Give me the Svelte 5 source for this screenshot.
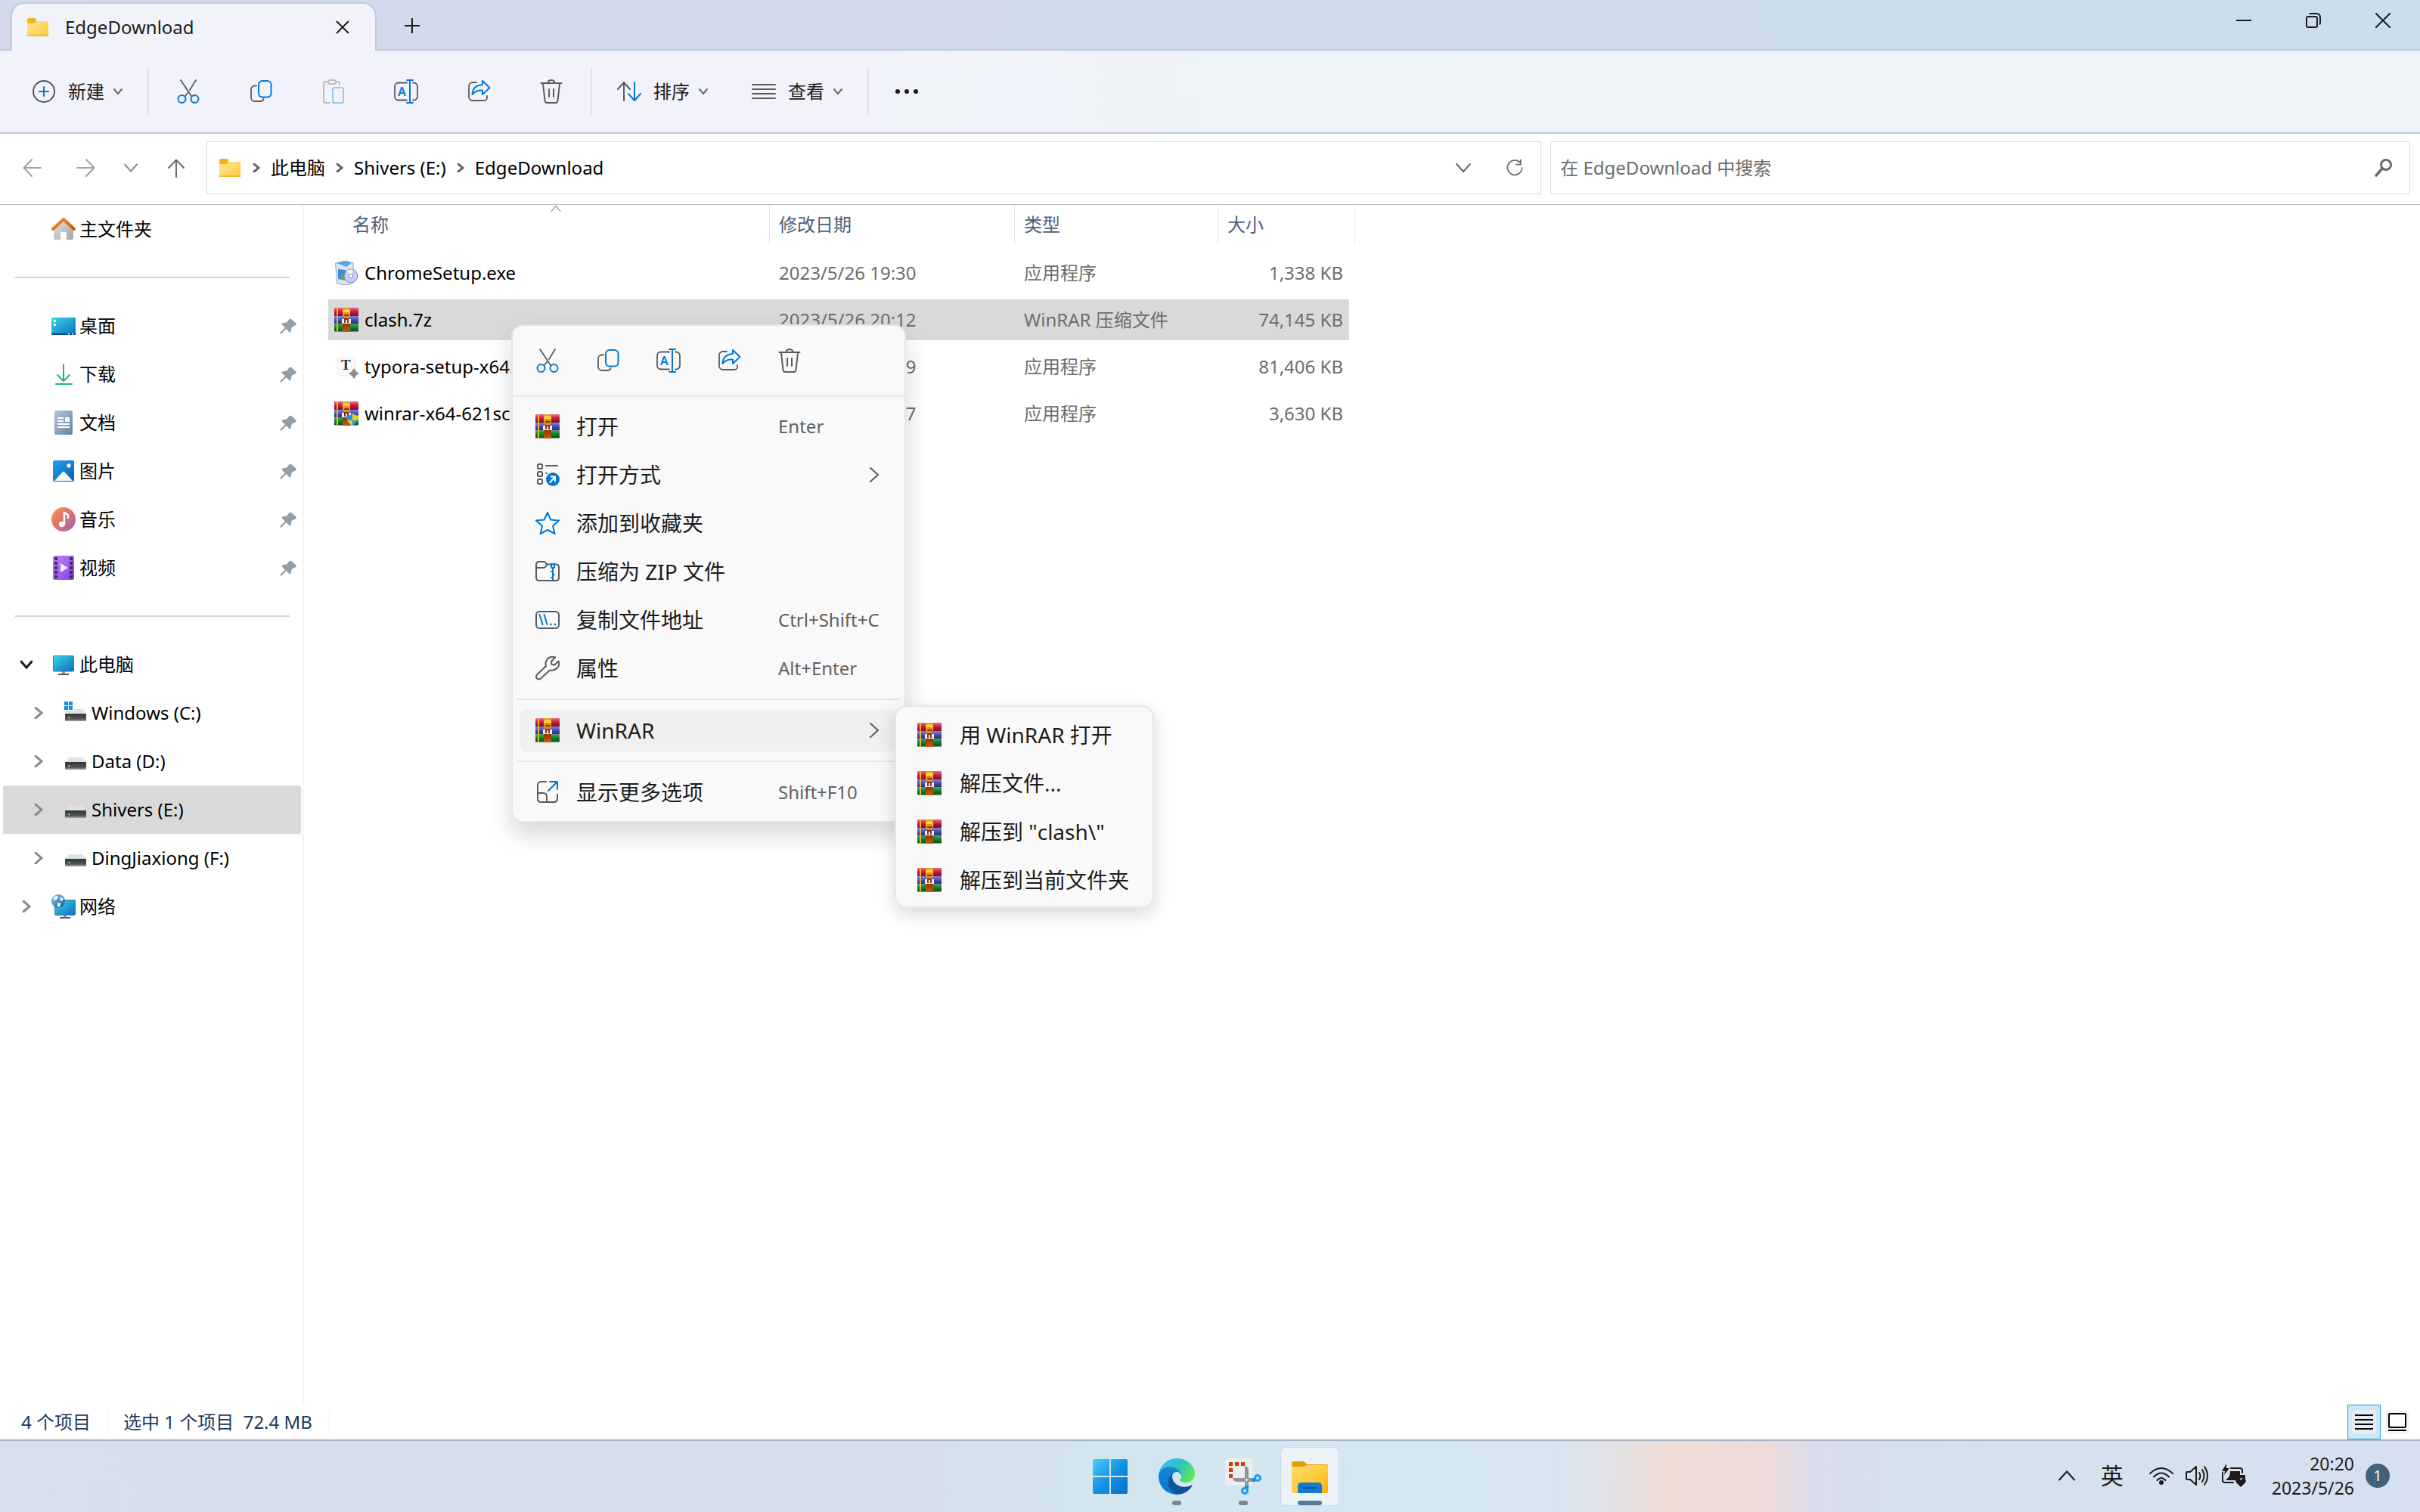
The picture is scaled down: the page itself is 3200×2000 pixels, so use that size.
<script lang="ts">
  interface Place {
    label: string
    icon: string
    level?: number
    pinned?: boolean
    open?: boolean
    expandable?: boolean
    selected?: boolean
  }

  interface FileRow {
    name: string
    icon: string
    date: string
    type: string
    size: string
    selected?: boolean
  }

  interface MenuEntry {
    label: string
    icon: string
    shortcut?: string
    submenu?: boolean
  }

  const quickAccess: Place[] = [
    { label: '桌面', icon: 'desktop', pinned: true },
    { label: '下载', icon: 'download', pinned: true },
    { label: '文档', icon: 'document', pinned: true },
    { label: '图片', icon: 'picture', pinned: true },
    { label: '音乐', icon: 'music', pinned: true },
    { label: '视频', icon: 'video', pinned: true }
  ]

  const tree: Place[] = [
    { label: '此电脑', icon: 'pc', expandable: true, open: true },
    { label: 'Windows (C:)', icon: 'drive-system', level: 1, expandable: true },
    { label: 'Data (D:)', icon: 'drive', level: 1, expandable: true },
    { label: 'Shivers (E:)', icon: 'drive', level: 1, expandable: true, selected: true },
    { label: 'DingJiaxiong (F:)', icon: 'drive', level: 1, expandable: true },
    { label: '网络', icon: 'network', expandable: true }
  ]

  const files: FileRow[] = [
    { name: 'ChromeSetup.exe', icon: 'installer', date: '2023/5/26 19:30', type: '应用程序', size: '1,338 KB' },
    { name: 'clash.7z', icon: 'winrar', date: '2023/5/26 20:12', type: 'WinRAR 压缩文件', size: '74,145 KB', selected: true },
    { name: 'typora-setup-x64.exe', icon: 'typora', date: '2023/5/26 19:49', type: '应用程序', size: '81,406 KB' },
    { name: 'winrar-x64-621sc.exe', icon: 'winrar-setup', date: '2023/5/26 20:17', type: '应用程序', size: '3,630 KB' }
  ]

  const crumbs = ['此电脑', 'Shivers (E:)', 'EdgeDownload']

  const toolbarActions = [
    { icon: 'cut', label: '剪切' },
    { icon: 'copy', label: '复制' },
    { icon: 'paste', label: '粘贴' },
    { icon: 'rename', label: '重命名' },
    { icon: 'share', label: '共享' },
    { icon: 'trash', label: '删除' }
  ]
  const menuActions = toolbarActions.filter((a) => a.icon !== 'paste')

  const menuTop: MenuEntry[] = [
    { label: '打开', icon: 'winrar', shortcut: 'Enter' },
    { label: '打开方式', icon: 'open-with', submenu: true },
    { label: '添加到收藏夹', icon: 'star' },
    { label: '压缩为 ZIP 文件', icon: 'zip' },
    { label: '复制文件地址', icon: 'path', shortcut: 'Ctrl+Shift+C' },
    { label: '属性', icon: 'wrench', shortcut: 'Alt+Enter' }
  ]

  const winrarItems = ['用 WinRAR 打开', '解压文件...', '解压到 "clash\\"', '解压到当前文件夹']
</script>

{#snippet winrarBooks()}
  <rect width="32" height="11" rx="1" fill="url(#book-red)" />
  <rect y="11" width="32" height="10.500" rx="1" fill="url(#book-blue)" />
  <rect y="21.500" width="32" height="10" rx="1" fill="url(#book-green)" />
  <path d="M4 1v9M4 12v9M4 22v8.500" stroke="#f3c623" stroke-width="1.800" />
  <rect x="11" width="10" height="11" fill="#d9a21b" />
  <rect x="11" y="21" width="10" height="11" fill="url(#strap)" />
  <path d="M11 5q0-3 5-3t5 3v2H11z" fill="#ffd23c" />
  <rect x="12" y="6" width="8" height="9" rx="2" fill="#e88a18" />
  <path d="M14 10h1.500M17 10h1.500" stroke="#3a1a00" stroke-width="1.500" />
  <path d="M10 15h12v6H10z" fill="#f4f0ea" />
  <path d="M13 14h6v2H13zM13 16h2v4h-2zM17 16h2v4h-2z" fill="#8a2c10" />
{/snippet}

{#snippet driveBody()}
  <path d="M7 11h18l5 6H2z" fill="#e0e1e6" />
  <rect x="2" y="17" width="28" height="10" rx="1" fill="url(#drive)" />
  <circle cx="7.500" cy="22" r="1.300" fill="#3ee85c" />
{/snippet}

{#snippet glyph(name: string, size = 32)}
  <svg class="glyph" width={size} height={size} viewBox="0 0 32 32" fill="none" stroke-linecap="round" stroke-linejoin="round" aria-hidden="true">
    {#if name === 'new'}
      <circle cx="16" cy="16" r="14" stroke="#555" stroke-width="2" />
      <path d="M16 10v12M10 16h12" stroke="#0078d7" stroke-width="2" />
    {:else if name === 'cut'}
      <path d="M6 1l14 21M26 1l-8 13M15 18l-3 4" stroke="#5b5b5b" stroke-width="1.800" />
      <g stroke="#0078d7" stroke-width="2"><circle cx="7.500" cy="26" r="5" /><circle cx="24.500" cy="26" r="5" /></g>
    {:else if name === 'copy'}
      <path d="M10 8.500H8a5 5 0 0 0-5 5V24a5 5 0 0 0 5 5h7q4 0 4.500-3" stroke="#5b5b5b" stroke-width="1.800" />
      <rect x="13" y="2" width="16.500" height="21.500" rx="5" stroke="#0078d7" stroke-width="2" />
    {:else if name === 'paste'}
      <path d="M9 3H5Q3 3 3 5v24q0 2 2 2h6M19 3h3q2 0 2 2v2" stroke="#bdbec3" stroke-width="2" />
      <rect x="9" y="1" width="10" height="5" rx="2.500" stroke="#bdbec3" stroke-width="2" />
      <rect x="15" y="11" width="14" height="20" rx="2" stroke="#99c8ec" stroke-width="2" />
    {:else if name === 'rename'}
      <path d="M17 4.500H6a5 5 0 0 0-5 5v13a5 5 0 0 0 5 5h11M25 4.500h1a5 5 0 0 1 5 5v13a5 5 0 0 1-5 5h-1" stroke="#5b5b5b" stroke-width="1.800" />
      <path d="M17 1h8M21 1v30M17 31h8" stroke="#0078d7" stroke-width="2" />
      <text x="5" y="21.500" font-size="16" font-weight="600" fill="#0078d7">A</text>
    {:else if name === 'share'}
      <path d="M13 4H8a5 5 0 0 0-5 5v14a5 5 0 0 0 5 5h15a4 4 0 0 0 4-4v-2" stroke="#5b5b5b" stroke-width="1.800" />
      <path d="M21 2l9.500 9-9.500 9v-5.500Q12 14 7.500 20 8 8 21 7z" stroke="#0078d7" stroke-width="2" />
    {:else if name === 'trash'}
      <path d="M2.500 5h27M12 4q0-3 4-3t4 3M5 6l2.500 22q.3 3 3 3h11q2.700 0 3-3L27 6M13 13v10M19 13v10" stroke="#5b5b5b" stroke-width="2" />
    {:else if name === 'sort'}
      <path d="M9 28V4M1 13l8-9 8 9" stroke="#5b5b5b" stroke-width="2" />
      <path d="M23 4v24M15 19l8 9 8-9" stroke="#0078d7" stroke-width="2" />
    {:else if name === 'view'}
      <path d="M1 7h30M1 13h30M1 19h30M1 25h30" stroke="#5b5b5b" stroke-width="2" />
    {:else if name === 'more'}
      <g fill="#1b1b1b"><circle cx="4" cy="16" r="3" /><circle cx="16" cy="16" r="3" /><circle cx="28" cy="16" r="3" /></g>
    {:else if name === 'winrar'}
      {@render winrarBooks()}
    {:else if name === 'winrar-setup'}
      {@render winrarBooks()}
      <path d="M24 16q4 3 8 3 0 9-8 13-8-4-8-13 4 0 8-3z" fill="#1a9ae8" />
      <path d="M24 16q4 3 8 3 0 4-1.500 6H24zM24 25v7q-5-3-6.500-7z" fill="#fcc80e" />
    {:else if name === 'open-with'}
      <g stroke="#5b5b5b" stroke-width="2">
        <rect x="3" y="2" width="6" height="6" rx="1.500" /><rect x="3" y="12" width="6" height="6" rx="1.500" /><rect x="3" y="22" width="6" height="6" rx="1.500" />
        <path d="M14 4h15M14 14h1" />
      </g>
      <circle cx="23" cy="22" r="9" fill="#0078d7" />
      <path d="M19.500 26l6-7M20.500 18.500h5.500v6" stroke="#fff" stroke-width="2" />
    {:else if name === 'star'}
      <path d="M16 2l4.300 9.500L31 12.600l-8 7.200L25.500 30 16 25l-9.500 5L9 19.800 1 12.600l10.700-1.100z" stroke="#0078d7" stroke-width="2" />
    {:else if name === 'zip'}
      <path d="M1 24V7q0-4 4-4h6q2 0 4 3.500H27q4 0 4 4V24q0 4-4 4H5q-4 0-4-4zM1 11h10q2 0 4-4.500" stroke="#5b5b5b" stroke-width="2" />
      <path d="M21 6h4v5h-4zM23 11v17M21 16h2M23 20h2M21 24h2" stroke="#0078d7" stroke-width="2" />
    {:else if name === 'path'}
      <rect x="1" y="5" width="30" height="22" rx="4.500" stroke="#5b5b5b" stroke-width="2" />
      <path d="M5.500 9l4 13M11.500 9l4 13" stroke="#0078d7" stroke-width="2" />
      <g fill="#0078d7"><circle cx="20.500" cy="22" r="1.400" /><circle cx="26" cy="22" r="1.400" /></g>
    {:else if name === 'wrench'}
      <path d="M26 1.500Q20-1 15.500 4q-3 4-1.500 9L2 24.500q-2 3 0 5 2.500 2 5 0L19 18.500q6 1 10-3 3.500-4 1.500-9l-5 5-4-.5-.5-4z" stroke="#5b5b5b" stroke-width="2" />
    {:else if name === 'show-more'}
      <path d="M14 2H8q-5 0-5 5v17q0 5 5 5h16q5 0 5-5v-5M3 17h7q5 0 5 5v7" stroke="#5b5b5b" stroke-width="2" />
      <path d="M17 14L29 2M19 2h10v10" stroke="#0078d7" stroke-width="2" />
    {:else if name === 'home'}
      <path d="M3 14L16 3l13 11v14q0 2-2 2h-6q-1 0-1-1v-8q0-1-1-1h-6q-1 0-1 1v8q0 1-1 1H5q-2 0-2-2z" fill="url(#wall)" />
      <path d="M2 16L16 3l14 13" stroke="url(#roof)" stroke-width="4" />
    {:else if name === 'desktop'}
      <rect y="5" width="32" height="23" rx="1.500" fill="url(#screen)" />
      <path d="M0 26h32v1q0 1-1 1H1q-1 0-1-1z" fill="#0b4a7c" />
      <path d="M3 8h3v3H3zM3 13h3v3H3zM22 26h2v1.500h-2zM27 26h2v1.500h-2z" fill="#fff" />
    {:else if name === 'download'}
      <path d="M16 3v22M8 17l8 8 8-8M6 29h21" stroke="#20b096" stroke-width="2" />
    {:else if name === 'document'}
      <rect x="4" width="24" height="32" rx="2" fill="url(#paper)" />
      <path d="M8 10h8M8 14h8M8 18h16M8 22h16" stroke="#fff" stroke-width="1.800" stroke-linecap="butt" />
      <path d="M18 9h6v6h-6z" fill="#fff" />
    {:else if name === 'picture'}
      <rect x="2" y="2" width="28" height="28" rx="2" fill="url(#photo)" />
      <path d="M4 29l11-12q1-1 2 0l11 12z" fill="#f2f8fd" />
      <circle cx="23" cy="9" r="2.700" fill="#fff" />
    {:else if name === 'music'}
      <circle cx="16" cy="16" r="16" fill="url(#disc)" />
      <path d="M17 23V7l5 3v4" stroke="#fff" stroke-width="2.500" />
      <circle cx="13.500" cy="22.500" r="3.700" fill="#fff" />
    {:else if name === 'video'}
      <rect x="2" width="28" height="32" rx="2" fill="url(#film)" />
      <path d="M6 2v28M26 2v28" stroke="#432a73" stroke-width="4" stroke-dasharray="4 2" stroke-linecap="butt" />
      <path d="M12 10l10 6-10 6z" fill="#f1eaf8" />
    {:else if name === 'pc'}
      <path d="M14 25h4v3h-4z" fill="#8d9aa5" />
      <path d="M9 28h14v2H9z" fill="#4b5a66" />
      <rect x="2.500" y="4.500" width="27" height="20.500" rx="1" fill="url(#screen)" stroke="#5d6d78" />
    {:else if name === 'drive'}
      {@render driveBody()}
    {:else if name === 'drive-system'}
      {@render driveBody()}
      <path d="M0 0h13v13H0z" fill="#fff" />
      <path d="M1 1h5v5H1zM7 1h5v5H7zM1 7h5v5H1zM7 7h5v5H7z" fill="#1490df" />
    {:else if name === 'network'}
      <path d="M16 28h4v3h-4z" fill="#8d9aa5" />
      <path d="M11 30h14v2H11z" fill="#4b5a66" />
      <rect x="4.500" y="7.500" width="27" height="20" rx="1" fill="url(#screen)" stroke="#5d6d78" />
      <circle cx="9" cy="9" r="9" fill="url(#globe)" />
      <path d="M2 6q4-5 6-4l1 3-4 3zM8 11l5 1-3 5-2-1zM12 3l4 3-2 3-3-2z" fill="#e6f3fb" />
    {:else if name === 'installer'}
      <path d="M2 3l13-3 10 3v26l-9 3-12-2z" fill="#dfe7f5" stroke="#8da0bf" />
      <path d="M3 3l12-3 8 3-7 5z" fill="#5aa5e8" />
      <path d="M5 11l10 1v14L5 24z" fill="#3d8be0" />
      <path d="M9 16l6 1v9l-6-1z" fill="#4cb83c" />
      <circle cx="22" cy="20" r="9" fill="#c5cbf3" stroke="#8188c4" />
      <path d="M22 20l-6-6q5-4 9-2z" fill="#eef2ff" />
      <circle cx="22" cy="20" r="2.500" fill="#fff" stroke="#8188c4" />
    {:else if name === 'typora'}
      <rect x="4" y="4" width="24" height="24" rx="4" fill="#fafafa" stroke="#ececec" />
      <text x="9" y="20" class="serif" font-size="19" font-weight="700" fill="#333">T</text>
      <circle cx="26" cy="25" r="4" fill="#8a8a8a" />
      <path d="M26 20v10M21 25h10" stroke="#8a8a8a" stroke-width="3" />
    {:else if name === 'folder'}
      <path d="M2 6q0-2 2-2h7q3 0 3 4v3H2z" fill="#f5b31a" />
      <path d="M2 11h9l3-3h15q1 0 1 1v18q0 1-1 1H3q-1 0-1-1z" fill="url(#folder)" />
      <path d="M2 27h28" stroke="#e3a21a" />
    {:else if name === 'pin'}
      <path d="M18 5q2-1 3 0l8 7q1 2-1 3l-6 3-2 8q-1 1-2 0l-5-5-8 8-2 0 0-2 8-8-5-5q-1-1 0-2l8-2z" fill="#929da5" />
    {:else if name === 'back'}
      <path d="M27 16H5M15 5L4.500 16 15 27" stroke="#a2a2a2" stroke-width="2" />
    {:else if name === 'forward'}
      <path d="M5 16h22M17 5l10.500 11L17 27" stroke="#a2a2a2" stroke-width="2" />
    {:else if name === 'up'}
      <path d="M16 28V6M6 16L16 5.500 26 16" stroke="#6c6c6c" stroke-width="2" />
    {:else if name === 'refresh'}
      <path d="M24 8a11 11 0 1 0 3 8M25 4v7h-7" stroke="#6c6c6c" stroke-width="2" />
    {:else if name === 'search'}
      <circle cx="19" cy="12" r="6.500" stroke="#6c6c6c" stroke-width="3" />
      <path d="M14 17l-8 9" stroke="#6c6c6c" stroke-width="3.500" />
    {:else if name === 'wifi'}
      <path d="M1 13q15-14 30 0M6 17.500q10-10 20 0M10.500 22q5.500-6 11 0" stroke="#1b1b1b" stroke-width="2" />
      <circle cx="16" cy="25" r="3" fill="#1b1b1b" />
    {:else if name === 'volume'}
      <path d="M1 12v8q0 1 1 1h4l8 7V4L6 11H2q-1 0-1 1zM18 12q3 4 0 9M22 8q5 8 0 16M25 4q8 12 0 24" stroke="#1b1b1b" stroke-width="2" />
    {:else if name === 'battery'}
      <path d="M12 6h12q3 0 3 3v3M1 12v10q0 3 3 3h11" stroke="#1b1b1b" stroke-width="2" />
      <path d="M11 10h13v5h7v6l-5-2-6 3H5l4-4q2-3 2-8z" fill="#1b1b1b" />
      <path d="M6 0L0 10h4l-1 5 7-9H6z" fill="#1b1b1b" />
      <path d="M25 31l-6-6q-2-3 1-5 3-1 5 2 2-3 5-2 3 2 1 5z" fill="#1b1b1b" />
    {/if}
  </svg>
{/snippet}

{#snippet chevron(dir: 'down' | 'up' | 'right', size = 12, weight = 2)}
  <svg class="glyph chevron {dir}" width={size} height={size} viewBox="0 0 {size} {size}" fill="none" stroke="currentColor" stroke-width={weight} stroke-linecap="round" aria-hidden="true">
    <path d="M1 {size / 4}L{size / 2} {size * 0.75}L{size - 1} {size / 4}" />
  </svg>
{/snippet}

{#snippet placeRow(place: Place)}
  <li>
    <a
      href="#{place.icon}"
      class="place"
      class:nested={place.level === 1}
      class:selected={place.selected}
      aria-current={place.selected ? 'page' : undefined}
    >
      <span class="twisty" class:open={place.open}>
        {#if place.expandable}
          {@render chevron(place.open ? 'down' : 'right', 16, 3)}
        {/if}
      </span>
      {@render glyph(place.icon)}
      <span class="place-label">{place.label}</span>
      {#if place.pinned}
        <span class="pin">{@render glyph('pin', 26)}</span>
      {/if}
    </a>
  </li>
{/snippet}

{#snippet menuItem(entry: MenuEntry, active = false)}
  <button type="button" role="menuitem" class="menu-item" class:active>
    {@render glyph(entry.icon)}
    <span class="menu-label">{entry.label}</span>
    {#if entry.shortcut}
      <span class="shortcut">{entry.shortcut}</span>
    {/if}
    {#if entry.submenu}
      <span class="menu-arrow">{@render chevron('right', 20, 2)}</span>
    {/if}
  </button>
{/snippet}

<!-- shared gradients -->
<svg class="defs" width="0" height="0" aria-hidden="true">
  <defs>
    <linearGradient id="book-red" x1="0" y1="0" x2="0" y2="1"><stop offset="0" stop-color="#f0688c" /><stop offset=".5" stop-color="#c8193c" /><stop offset="1" stop-color="#7d0c22" /></linearGradient>
    <linearGradient id="book-blue" x1="0" y1="0" x2="0" y2="1"><stop offset="0" stop-color="#7f86e0" /><stop offset=".5" stop-color="#474bb4" /><stop offset="1" stop-color="#25276c" /></linearGradient>
    <linearGradient id="book-green" x1="0" y1="0" x2="0" y2="1"><stop offset="0" stop-color="#38a84e" /><stop offset=".5" stop-color="#147a30" /><stop offset="1" stop-color="#0a4a1c" /></linearGradient>
    <linearGradient id="strap" x1="0" y1="0" x2="0" y2="1"><stop offset="0" stop-color="#8a3a08" /><stop offset="1" stop-color="#cc5a10" /></linearGradient>
    <linearGradient id="drive" x1="0" y1="0" x2="0" y2="1"><stop offset="0" stop-color="#333" /><stop offset=".7" stop-color="#555" /><stop offset="1" stop-color="#aaa" /></linearGradient>
    <linearGradient id="wall" x1="0" y1="0" x2="1" y2="1"><stop offset="0" stop-color="#e6e6e6" /><stop offset="1" stop-color="#a3a3a3" /></linearGradient>
    <linearGradient id="roof" x1="0" y1="0" x2="1" y2="1"><stop offset="0" stop-color="#f7921e" /><stop offset="1" stop-color="#d44c0c" /></linearGradient>
    <linearGradient id="screen" x1="0" y1="0" x2="1" y2="1"><stop offset="0" stop-color="#36dbe4" /><stop offset="1" stop-color="#0a6cc0" /></linearGradient>
    <linearGradient id="paper" x1="0" y1="0" x2="1" y2="1"><stop offset="0" stop-color="#b4c4d6" /><stop offset="1" stop-color="#6485a6" /></linearGradient>
    <linearGradient id="photo" x1="0" y1="0" x2="1" y2="1"><stop offset="0" stop-color="#1ea0e8" /><stop offset="1" stop-color="#0860b0" /></linearGradient>
    <linearGradient id="disc" x1="0" y1="0" x2="1" y2="1"><stop offset="0" stop-color="#fa9648" /><stop offset=".5" stop-color="#dc7470" /><stop offset="1" stop-color="#9a62c0" /></linearGradient>
    <linearGradient id="film" x1="0" y1="0" x2="1" y2="1"><stop offset="0" stop-color="#bd84f5" /><stop offset="1" stop-color="#8340e0" /></linearGradient>
    <linearGradient id="globe" x1="0" y1="0" x2="1" y2="1"><stop offset="0" stop-color="#85c3e6" /><stop offset="1" stop-color="#145d94" /></linearGradient>
    <linearGradient id="folder" x1="0" y1="0" x2="1" y2="1"><stop offset="0" stop-color="#ffe597" /><stop offset="1" stop-color="#ffcb3c" /></linearGradient>
    <linearGradient id="win" x1="0" y1="0" x2="1" y2="1"><stop offset="0" stop-color="#4cd0ff" /><stop offset=".5" stop-color="#1493e2" /><stop offset="1" stop-color="#0070cc" /></linearGradient>
    <linearGradient id="edge-dark" x1="0" y1="0" x2="1" y2="0"><stop offset="0" stop-color="#0c59a4" /><stop offset="1" stop-color="#114a8b" /></linearGradient>
    <linearGradient id="edge-mid" x1=".5" y1="0" x2=".2" y2="1"><stop offset="0" stop-color="#1b86cf" /><stop offset="1" stop-color="#0078d7" /></linearGradient>
    <linearGradient id="edge-top" x1="0" y1=".3" x2="1" y2=".7"><stop offset="0" stop-color="#35c1f1" /><stop offset=".5" stop-color="#2ac3c5" /><stop offset="1" stop-color="#66eb4e" /></linearGradient>
    <linearGradient id="folder-big" x1="0" y1="0" x2="1" y2="1"><stop offset="0" stop-color="#ffda6c" /><stop offset=".6" stop-color="#ffc936" /><stop offset="1" stop-color="#f5b000" /></linearGradient>
  </defs>
</svg>

<div class="screen">
  <header class="titlebar">
    <div class="tab">
      {@render glyph('folder')}
      <span class="tab-title">EdgeDownload</span>
      <button type="button" class="tab-close" aria-label="关闭标签页">
        <svg width="18" height="18" viewBox="0 0 18 18" stroke="currentColor" stroke-width="2"><path d="M1 1l16 16M17 1L1 17" /></svg>
      </button>
    </div>
    <button type="button" class="new-tab" aria-label="新标签页">
      <svg width="20" height="20" viewBox="0 0 20 20" stroke="currentColor" stroke-width="2"><path d="M10 0v20M0 10h20" /></svg>
    </button>
    <div class="window-controls">
      <button type="button" aria-label="最小化">
        <svg width="20" height="20" viewBox="0 0 20 20" stroke="currentColor" stroke-width="2"><path d="M0 10h20" /></svg>
      </button>
      <button type="button" aria-label="还原">
        <svg width="20" height="20" viewBox="0 0 20 20" fill="none" stroke="currentColor" stroke-width="2"><rect x="1" y="5" width="14" height="14" rx="2" /><path d="M5 2q0-1 2-1h7q5 0 5 5v7q0 2-1 2" /></svg>
      </button>
      <button type="button" aria-label="关闭">
        <svg width="20" height="20" viewBox="0 0 20 20" stroke="currentColor" stroke-width="2"><path d="M0 0l20 20M20 0L0 20" /></svg>
      </button>
    </div>
  </header>

  <div class="toolbar">
    <button type="button" class="labelled">
      {@render glyph('new')}<span>新建</span>{@render chevron('down')}
    </button>
    <span class="rule"></span>
    {#each toolbarActions as action}
      <button type="button" class="tool" aria-label={action.label} disabled={action.icon === 'paste'}>{@render glyph(action.icon)}</button>
    {/each}
    <span class="rule"></span>
    <button type="button" class="labelled">
      {@render glyph('sort')}<span>排序</span>{@render chevron('down')}
    </button>
    <button type="button" class="labelled">
      {@render glyph('view')}<span>查看</span>{@render chevron('down')}
    </button>
    <span class="rule"></span>
    <button type="button" class="tool more" aria-label="更多">{@render glyph('more')}</button>
  </div>

  <div class="navbar">
    <button type="button" class="nav-btn" aria-label="后退">{@render glyph('back')}</button>
    <button type="button" class="nav-btn" aria-label="前进">{@render glyph('forward')}</button>
    <button type="button" class="nav-btn recent" aria-label="最近位置">{@render chevron('down', 18)}</button>
    <button type="button" class="nav-btn" aria-label="向上">{@render glyph('up')}</button>
    <div class="address">
      {@render glyph('folder')}
      {#each crumbs as crumb}
        <span class="crumb-arrow">{@render chevron('right', 12, 3)}</span>
        <a href="#{crumb}">{crumb}</a>
      {/each}
      <button type="button" class="address-btn push" aria-label="历史记录">{@render chevron('down', 20)}</button>
      <button type="button" class="address-btn" aria-label="刷新">{@render glyph('refresh', 28)}</button>
    </div>
    <label class="search">
      <input type="text" placeholder="在 EdgeDownload 中搜索" aria-label="搜索" />
      {@render glyph('search')}
    </label>
  </div>

  <div class="body">
    <nav class="sidebar" aria-label="导航窗格">
      <ul>
        {@render placeRow({ label: '主文件夹', icon: 'home' })}
      </ul>
      <hr />
      <ul>
        {#each quickAccess as place}
          {@render placeRow(place)}
        {/each}
      </ul>
      <hr />
      <ul>
        {#each tree as place}
          {@render placeRow(place)}
        {/each}
      </ul>
    </nav>

    <main class="files">
      <table>
        <colgroup>
          <col class="col-name" />
          <col class="col-date" />
          <col class="col-type" />
          <col class="col-size" />
          <col class="col-edge" />
        </colgroup>
        <thead>
          <tr>
            <th scope="col" aria-sort="ascending">
              <div class="head first">名称<span class="sort-mark">{@render chevron('up', 14, 1)}</span></div>
            </th>
            <th scope="col"><div class="head">修改日期</div></th>
            <th scope="col"><div class="head">类型</div></th>
            <th scope="col" colspan="2"><div class="head">大小</div></th>
          </tr>
        </thead>
        <tbody>
          {#each files as file}
            <tr class:selected={file.selected}>
              <td class="name"><span class="file">{@render glyph(file.icon)}{file.name}</span></td>
              <td>{file.date}</td>
              <td>{file.type}</td>
              <td class="size">{file.size}</td>
            </tr>
          {/each}
        </tbody>
      </table>
    </main>
  </div>

  <footer class="statusbar">
    <span class="status">4 个项目</span>
    <span class="status">选中 1 个项目&nbsp; 72.4 MB</span>
    <div class="view-switch">
      <button type="button" class="on" aria-label="详细信息" aria-pressed="true">
        <svg width="32" height="32" viewBox="0 0 32 32"><rect width="32" height="32" rx="4" fill="#e6edf2" /><path d="M4 7h24M4 13h24M4 19h24M4 25h24" stroke="#000" stroke-width="2" /></svg>
      </button>
      <button type="button" aria-label="大缩略图" aria-pressed="false">
        <svg width="32" height="32" viewBox="0 0 32 32" fill="none"><rect width="32" height="32" rx="4" fill="#f4f4f4" /><rect x="5" y="5" width="22" height="18" rx="1" fill="#fff" stroke="#000" stroke-width="2" /><path d="M4 27h24" stroke="#000" stroke-width="2" /></svg>
      </button>
    </div>
  </footer>

  <div class="taskbar">
    <div class="apps">
      <button type="button" class="app" aria-label="开始">
        <svg width="48" height="48" viewBox="0 0 48 48"><path d="M3 1h20v22H1V3q0-2 2-2zM25 1h20q2 0 2 2v20H25zM1 25h22v22H3q-2 0-2-2zM25 25h22v20q0 2-2 2H25z" fill="url(#win)" /></svg>
      </button>
      <button type="button" class="app running" aria-label="Microsoft Edge">
        <svg width="48" height="48" viewBox="0 0 256 256">
          <path d="M231 190.500c-3.400 1.800-6.900 3.400-10.500 4.700a101.500 101.500 0 0 1-35.900 6.600c-47.300 0-88.500-32.500-88.500-74.300 0-11.400 6.400-21.900 16.400-27.300-42.800 1.800-53.800 46.400-53.800 72.500 0 74 68.100 81.400 82.800 81.400 7.900 0 19.800-2.300 27-4.600l1.300-.4a128.300 128.300 0 0 0 66.600-52.800 4 4 0 0 0-5.400-5.800z" fill="url(#edge-dark)" />
          <path d="M105.700 241.400a79.200 79.200 0 0 1-22.700-21.300 80.700 80.700 0 0 1 29.500-120c3.100-1.400 8.400-4.100 15.500-4a32.400 32.400 0 0 1 25.700 13 31.900 31.900 0 0 1 6.300 18.700c0-.2 24.500-79.600-80-79.600-43.900 0-80 41.600-80 78.200a130.200 130.200 0 0 0 12.100 56 128 128 0 0 0 156.400 67 75.500 75.500 0 0 1-62.800-8z" fill="url(#edge-mid)" />
          <path d="M152.300 148.900c-.9 1-3.400 2.500-3.400 5.600 0 2.600 1.700 5.100 4.800 7.200 14.400 10 41.500 8.700 41.600 8.700 10.700 0 21.100-2.900 30.300-8.300A61.400 61.400 0 0 0 256 109.200c.3-22.400-8-37.300-11.300-43.900C223.500 23.900 177.700 0 128 0A128 128 0 0 0 0 126.200c.5-36.500 36.800-66 80-66 3.500 0 23.500.3 42 10.100 16.300 8.600 24.900 19 30.800 29.200 6.200 10.700 7.300 24.100 7.300 29.500s-2.700 13.300-7.800 19.900z" fill="url(#edge-top)" />
        </svg>
      </button>
      <button type="button" class="app running" aria-label="截图工具">
        <svg width="48" height="48" viewBox="0 0 48 48" fill="none">
          <rect width="36" height="36" rx="4" fill="#eceded" />
          <path d="M5 5h5v5H5zM13 5h5v5h-5zM21 5h5v5h-5zM5 13h5v5H5zM5 21h5v5H5z" fill="#d83b01" />
          <path d="M26 10q5 1 5 6v20h-5zM10 26h26v5H16q-5 0-6-5z" fill="#8d969d" />
          <path d="M26 36h5v4h-5zM36 26h4v5h-4z" fill="#1591dc" />
          <circle cx="26" cy="43" r="3.500" stroke="#1b9ee8" stroke-width="3" />
          <circle cx="43" cy="26" r="3.500" stroke="#1b9ee8" stroke-width="3" />
          <path d="M28.500 26.500v4M26.500 28.500h4" stroke="#fff" />
        </svg>
      </button>
      <button type="button" class="app running current" aria-label="文件资源管理器">
        <svg width="48" height="48" viewBox="0 0 48 48">
          <path d="M0 6q0-2 2-2h13q2 0 5 4h26q2 0 2 2v4H0z" fill="#dfa000" />
          <path d="M0 11h16q2 0 4-2h26q2 0 2 2v33q0 2-2 2H2q-2 0-2-2z" fill="url(#folder-big)" />
          <path d="M8 46V37q0-5 5-5h22q5 0 5 5v9z" fill="#0f7bd3" />
          <path d="M15 39h18" stroke="#0a4f93" stroke-width="2" stroke-linecap="round" />
        </svg>
      </button>
    </div>
    <div class="tray">
      <button type="button" aria-label="显示隐藏的图标">{@render chevron('up', 22)}</button>
      <button type="button" class="ime">英</button>
      <button type="button" class="system" aria-label="网络、音量、电池">
        {@render glyph('wifi')}{@render glyph('volume')}{@render glyph('battery')}
      </button>
      <button type="button" class="clock"><span>20:20</span><span>2023/5/26</span></button>
      <span class="badge">1</span>
    </div>
  </div>

  <div class="menu context" role="menu" aria-label="上下文菜单">
    <div class="menu-actions">
      {#each menuActions as action}
        <button type="button" aria-label={action.label}>{@render glyph(action.icon)}</button>
      {/each}
    </div>
    <div class="menu-list">
      {#each menuTop as entry}
        {@render menuItem(entry)}
      {/each}
      <hr />
      {@render menuItem({ label: 'WinRAR', icon: 'winrar', submenu: true }, true)}
      <hr />
      {@render menuItem({ label: '显示更多选项', icon: 'show-more', shortcut: 'Shift+F10' })}
    </div>
    <div class="menu submenu" role="menu" aria-label="WinRAR">
      {#each winrarItems as label}
        {@render menuItem({ label, icon: 'winrar' })}
      {/each}
    </div>
  </div>
</div>

<style>
  :global(body) {
    margin: 0;
  }

  .defs {
    position: absolute;
  }

  .screen {
    position: relative;
    display: flex;
    flex-direction: column;
    min-height: 100vh;
    background: #fff;
    color: #000;
    font-family: 'Noto Sans', 'Noto Sans CJK SC', sans-serif;
    font-size: 24px;
    line-height: 32px;
    overflow: hidden;
  }

  .serif {
    font-family: 'Liberation Serif', serif;
  }

  button {
    display: flex;
    align-items: center;
    justify-content: center;
    padding: 0;
    border: 0;
    background: none;
    color: inherit;
    font: inherit;
  }

  a {
    color: inherit;
    text-decoration: none;
  }

  ul {
    margin: 0;
    padding: 0;
    list-style: none;
  }

  .glyph {
    flex: none;
    display: block;
  }

  .chevron.up {
    transform: rotate(180deg);
  }

  .chevron.right {
    transform: rotate(-90deg);
  }

  /* title bar */
  .titlebar {
    display: flex;
    height: 67px;
    padding-left: 14px;
    background: linear-gradient(90deg, #d4d9eb, #d1dbec 40%, #cddceb 75%, #ccdeeb);
    box-shadow: inset 0 -2px #c0cade;
    color: #1b1b1b;
  }

  .tab {
    display: flex;
    align-items: center;
    align-self: flex-end;
    box-sizing: border-box;
    width: 484px;
    height: 64px;
    padding: 0 34px 0 18px;
    border: 2px solid #c0cade;
    border-bottom: 0;
    border-radius: 18px 18px 0 0;
    background: #f2f3fa;
  }

  .tab-title {
    flex: 1;
    margin-left: 20px;
  }

  .new-tab {
    width: 94px;
  }

  .window-controls {
    display: flex;
    height: 54px;
    margin-left: auto;
    padding-right: 3px;
  }

  .window-controls button {
    width: 92px;
  }

  /* command bar */
  .toolbar {
    display: flex;
    align-items: center;
    height: 108px;
    padding-left: 13px;
    border-bottom: 2px solid #c0c9dc;
    background: linear-gradient(90deg, #f2f3fa 35%, #eff4f9 50%);
    color: #1b1b1b;
  }

  .labelled {
    height: 64px;
    padding: 0 29px;
  }

  .labelled span {
    margin: 0 12px 0 16px;
  }

  .labelled :global(.chevron) {
    color: #666;
  }

  .tool {
    width: 96px;
    height: 64px;
  }

  .tool.more {
    width: 92px;
  }

  .rule {
    width: 2px;
    height: 64px;
    margin: 0 4px;
    background: #e3e4ea;
  }

  /* address row */
  .navbar {
    display: flex;
    align-items: center;
    height: 90px;
    padding: 0 13px 3px 8px;
    border-bottom: 1px solid #b9b9b9;
  }

  .nav-btn {
    width: 70px;
    height: 64px;
    color: #8a8a8a;
  }

  .nav-btn.recent {
    width: 50px;
  }

  .address,
  .search {
    display: flex;
    align-items: center;
    box-sizing: border-box;
    height: 70px;
    border: 1px solid #d9d9d9;
  }

  .address {
    flex: 19 1 0;
    margin: 0 12px 0 5px;
    padding-left: 14px;
  }

  .crumb-arrow {
    display: flex;
    justify-content: center;
    width: 38px;
    color: #666;
  }

  .address-btn {
    width: 68px;
    height: 64px;
    color: #666;
  }

  .push {
    margin-left: auto;
  }

  .search {
    flex: 12 1 0;
    padding: 0 18px 0 12px;
  }

  .search input {
    flex: 1;
    min-width: 0;
    padding: 0;
    border: 0;
    outline: 0;
    background: none;
    color: #000;
    font: inherit;
  }

  .search input::placeholder {
    color: #6d6d6d;
    opacity: 1;
  }

  /* sidebar and file list */
  .body {
    display: flex;
    flex: 1;
  }

  .sidebar {
    box-sizing: border-box;
    width: 402px;
    border-right: 2px solid #f5f5f5;
  }

  .sidebar hr {
    height: 2px;
    margin: 31px 17px 31px 20px;
    border: 0;
    background: #d2d2d2;
  }

  .place {
    display: flex;
    align-items: center;
    height: 64px;
    margin: 0 2px 0 4px;
    padding: 0 4px 0 19px;
    border-radius: 2px;
  }

  .place.nested {
    padding-left: 35px;
  }

  .place.selected {
    background: #d9d9d9;
  }

  .twisty {
    display: flex;
    justify-content: center;
    width: 24px;
    margin-right: 21px;
    color: #8b8b8b;
  }

  .twisty.open {
    color: #1b1b1b;
  }

  .place-label {
    margin-left: 5px;
  }

  .pin {
    margin-left: auto;
  }

  .files {
    flex: 1;
    padding-left: 32px;
  }

  table {
    width: 1358px;
    margin-top: -7px;
    border-collapse: separate;
    border-spacing: 0 8px;
    table-layout: fixed;
  }

  .col-name {
    width: 584px;
  }

  .col-date {
    width: 324px;
  }

  .col-type {
    width: 269px;
  }

  .col-size {
    width: 173px;
  }

  .col-edge {
    width: 8px;
  }

  th,
  td {
    padding: 0;
    font-weight: 400;
    text-align: left;
    white-space: nowrap;
  }

  th {
    height: 54px;
    vertical-align: top;
  }

  .head {
    position: relative;
    box-sizing: border-box;
    height: 50px;
    padding: 9px 0 0 12px;
    border-right: 1px solid #e4e4e4;
    color: #4c607a;
  }

  .head.first {
    padding-left: 32px;
  }

  .sort-mark {
    position: absolute;
    top: -3px;
    left: 294px;
    color: #555;
  }

  td {
    height: 54px;
    padding-left: 12px;
    color: #6d6d6d;
  }

  td.name {
    padding-left: 8px;
    color: #000;
  }

  td.size {
    padding-right: 8px;
    text-align: right;
  }

  .file {
    display: flex;
    align-items: center;
    gap: 8px;
  }

  tr.selected td {
    background: #d9d9d9;
  }

  /* status bar */
  .statusbar {
    display: flex;
    align-items: center;
    height: 46px;
    color: #1e395b;
  }

  .status {
    padding: 0 22px 0 28px;
    border-right: 1px solid #f0f0f0;
  }

  .status + .status {
    padding-left: 20px;
  }

  .view-switch {
    display: flex;
    gap: 2px;
    margin-left: auto;
    padding-right: 10px;
  }

  .view-switch button {
    box-sizing: border-box;
    width: 40px;
    height: 46px;
  }

  .view-switch .on {
    width: 44px;
    border: 1px solid #26a0da;
    background: #cbe8f6;
  }

  /* taskbar */
  .taskbar {
    display: grid;
    grid-template-columns: 1fr auto 1fr;
    align-items: center;
    height: 94px;
    border-top: 2px solid #abb4c0;
    background: linear-gradient(90deg, #d6dfec 0%, #d6dcea 35%, #d3e6f0 46%, #d5e7f0 60%, #dae5ee 65%, #f0ddd6 69%, #eedbda 73%, #dadcec 75%, #d4e0ea 78%, #d5e2ee 90%, #d6e0f0);
  }

  .apps {
    grid-column: 2;
    display: flex;
    gap: 12px;
  }

  .app {
    position: relative;
    width: 76px;
    height: 76px;
    border-radius: 6px;
  }

  .current {
    background: #ebf3f9;
    box-shadow: 0 0 0 1px #c9d9e3;
  }

  .running::after {
    content: '';
    position: absolute;
    bottom: 0;
    left: 50%;
    width: 12px;
    height: 6px;
    margin-left: -6px;
    border-radius: 3px;
    background: #7b858b;
  }

  .current::after {
    width: 32px;
    margin-left: -16px;
    background: #52799a;
  }

  .tray {
    display: flex;
    align-items: center;
    justify-content: flex-end;
    gap: 34px;
    padding: 0 40px 2px 0;
    color: #1b1b1b;
  }

  .ime {
    font-size: 30px;
  }

  .system {
    gap: 16px;
  }

  .clock {
    flex-direction: column;
    align-items: flex-end;
    font-size: 23px;
  }

  .badge {
    width: 32px;
    margin-left: -19px;
    border-radius: 50%;
    background: #43607c;
    color: #fff;
    font-size: 20px;
    text-align: center;
  }

  /* menus */
  .menu {
    position: absolute;
    box-sizing: border-box;
    border: 2px solid #e6e6e6;
    border-radius: 16px;
    background: #f9f9f9;
    box-shadow: 0 16px 32px rgba(0, 0, 0, 0.16);
    color: #1b1b1b;
    font-size: 28px;
  }

  .context {
    top: 429px;
    left: 676px;
    width: 522px;
  }

  .menu-actions {
    display: flex;
    height: 92px;
    padding-left: 6px;
    border-bottom: 2px solid #e6e6e6;
  }

  .menu-actions button {
    width: 80px;
  }

  .menu-list,
  .submenu {
    display: flex;
    flex-direction: column;
  }

  .menu-list {
    padding: 7px 6px 6px;
  }

  .menu-list hr {
    align-self: stretch;
    height: 2px;
    margin: 8px 0;
    border: 0;
    background: #e6e6e6;
  }

  .menu-item {
    justify-content: flex-start;
    height: 56px;
    margin: 4px;
    padding: 0 20px;
    border-radius: 8px;
    text-align: left;
    white-space: nowrap;
  }

  .menu-item.active {
    background: #f0f0f0;
  }

  .menu-label {
    flex: 1;
    margin-left: 22px;
  }

  .shortcut {
    width: 137px;
    color: #606060;
    font-size: 24px;
  }

  .menu-arrow {
    color: #5b5b5b;
  }

  .submenu {
    top: 502px;
    left: 505px;
    width: 343px;
    padding: 5px 4px 3px;
    box-shadow: 0 8px 24px rgba(0, 0, 0, 0.16);
  }

  .submenu .menu-label {
    margin-left: 24px;
  }
</style>
